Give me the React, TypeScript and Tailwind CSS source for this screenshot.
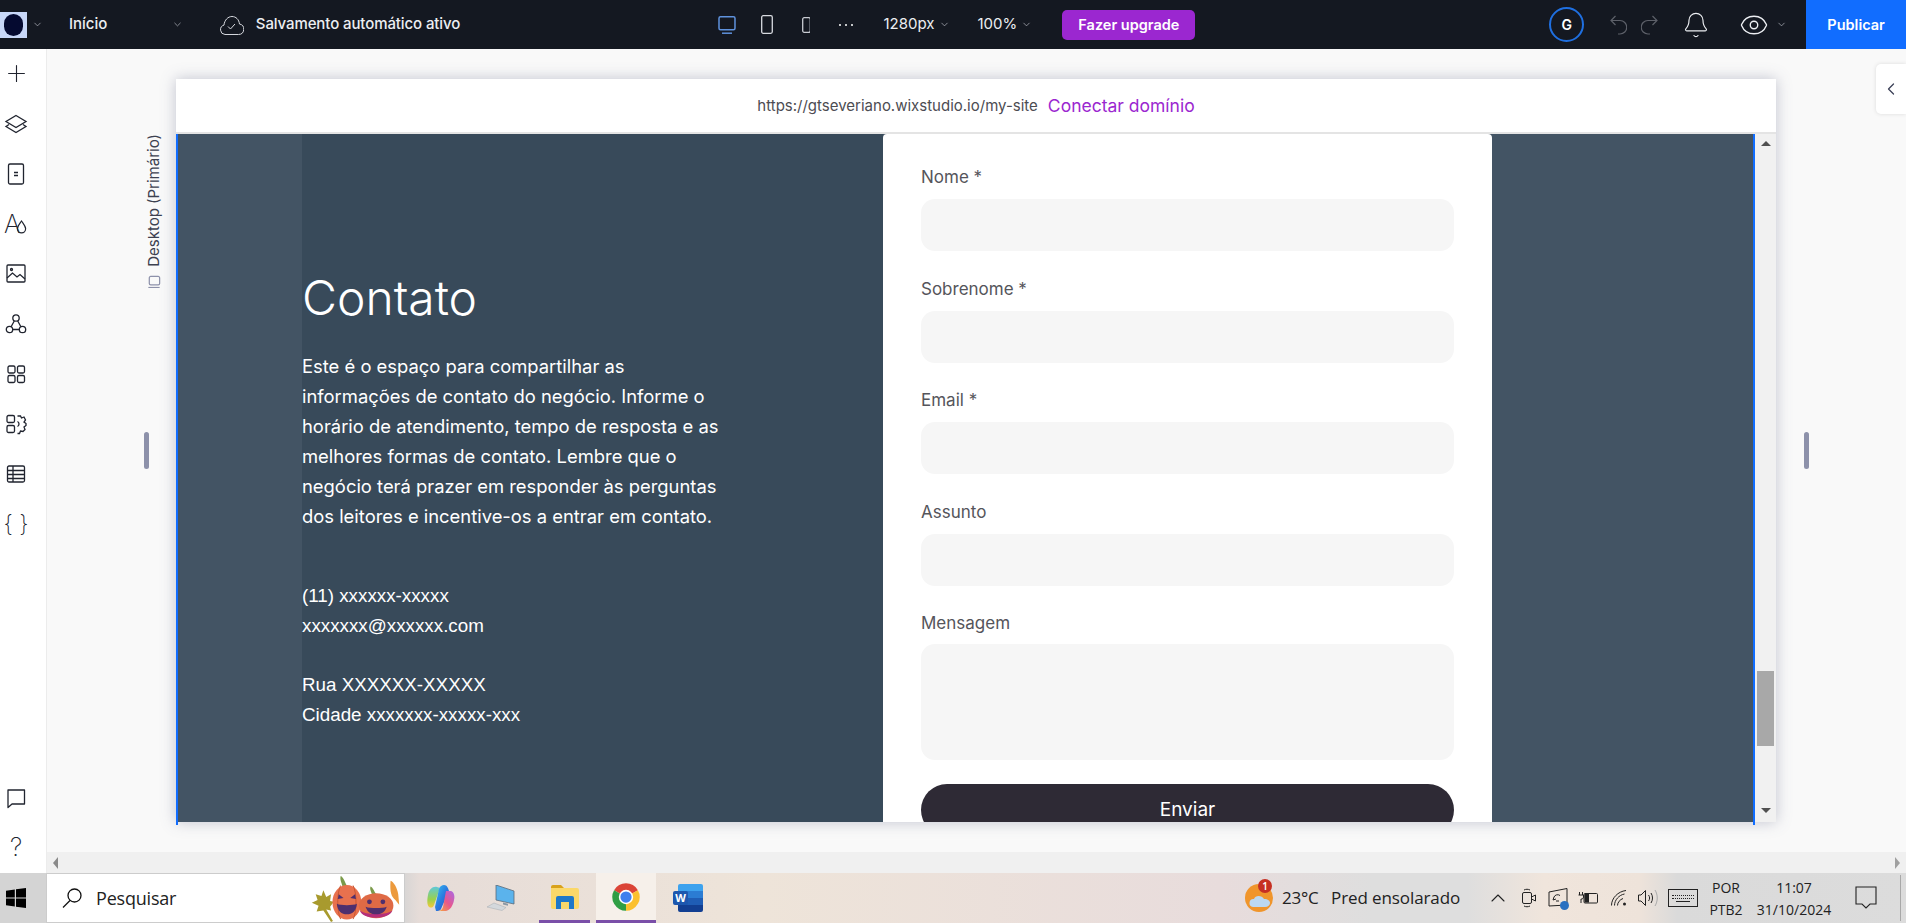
import React from "react";
import { Plus, ChevronDown, ChevronLeft, ChevronUp, Bell, Eye } from "lucide-react";

const railIcon = "h-[24px] w-[24px] fill-none stroke-[#20242f] stroke-[1.3]";

const RailLayers = () => (
  <svg viewBox="0 0 24 24" className={railIcon}>
    <path d="M12 3.500 22 9.500 12 15.500 2 9.500Z" />
    <path d="M5 12.500 2 14.500 12 20.500 22 14.500 19 12.500" />
  </svg>
);
const RailPages = () => (
  <svg viewBox="0 0 24 24" className={railIcon}>
    <rect x="4.500" y="2" width="15" height="20" rx="1.500" />
    <path d="M10 10.500h4M10 13.500h4" />
  </svg>
);
const RailFont = () => (
  <div className="flex h-[24px] w-[24px] items-center">
    <span className="text-[25px] leading-none font-extralight text-[#20242f]">A</span>
    <svg viewBox="0 0 12 16" className="-ml-[4px] mt-[5px] h-[15px] w-[11px] shrink-0 fill-none stroke-[#20242f] stroke-[1.300]">
      <path d="M6 2C4 5 1.500 7.500 1.500 10.500a4.500 4.500 0 0 0 9 0C10.500 7.500 8 5 6 2Z" />
    </svg>
  </div>
);
const RailImage = () => (
  <svg viewBox="0 0 24 24" className={railIcon}>
    <rect x="3" y="3" width="18" height="17" rx="1" />
    <path d="M3 16 8.500 11 13 15l3-2.500 5 4.500" />
    <circle cx="7.500" cy="7.500" r="1" />
  </svg>
);
const RailNodes = () => (
  <svg viewBox="0 0 24 24" className={railIcon}>
    <circle cx="12" cy="6" r="3.200" />
    <circle cx="5.500" cy="17.500" r="3.200" />
    <circle cx="18.500" cy="17.500" r="3.200" />
    <path d="M10.400 8.800 7.100 14.700M13.600 8.800l3.300 5.900M8.700 17.500h6.600" />
  </svg>
);
const RailGrid = () => (
  <svg viewBox="0 0 24 24" className={railIcon}>
    <rect x="4" y="4" width="7" height="7" rx="1.500" />
    <rect x="13.500" y="4" width="7" height="7" rx="1.500" />
    <rect x="4" y="13.500" width="7" height="7" rx="1.500" />
    <rect x="13.500" y="13.500" width="7" height="7" rx="1.500" />
  </svg>
);
const RailApps = () => (
  <svg viewBox="0 0 24 24" className={railIcon}>
    <rect x="3" y="3.500" width="7.500" height="7" rx="1.500" />
    <rect x="3" y="13.500" width="7.500" height="7" rx="1.500" />
    <path d="M13.500 4h3l1 2 2.500-1 1.500 3-1.500 2 2 1.500v2l-2 1.500 1 2.500-2 2-2.500-.5-1 2.500h-2" />
    <path d="M13.500 9.500c2 1 2 4 0 5" />
  </svg>
);
const RailTable = () => (
  <svg viewBox="0 0 24 24" className={railIcon}>
    <rect x="3.500" y="4" width="17" height="16" rx="1.500" />
    <path d="M3.500 8.500h17M3.500 12.500h17M3.500 16.500h17M9 4v16" />
  </svg>
);
const RailChat = () => (
  <svg viewBox="0 0 24 24" className={railIcon}>
    <path d="M4 4h16.500v14H8L4 21.500Z" strokeLinejoin="round" />
  </svg>
);

const MiniChevron = () => <ChevronDown className="h-[11px] w-[11px] text-[#b9bcc4]" strokeWidth={1.500} />;

const DeviceLabel = () => (
  <div className="ml-[100px] mt-[85px] flex h-[154px] w-[14px] flex-col items-center gap-[8px] text-[#3d4150]">
    <span className="rotate-180 text-[15px] leading-[14px] whitespace-nowrap [writing-mode:vertical-rl]">
      Desktop (Primário)
    </span>
    <svg viewBox="0 0 14 14" className="h-[14px] w-[14px] fill-none stroke-[#8d91aa] stroke-[1.300]">
      <rect x="1.500" y="1" width="9" height="11" rx="1.500" transform="rotate(90 7 7)" />
      <path d="M1 13.300h12" />
    </svg>
  </div>
);

const TopBar = () => (
  <header className="flex h-[49px] items-center bg-[#141821] text-[15px] font-medium text-[#eceef2]">
    <div className="flex h-[26px] w-[27px] items-center justify-center bg-[#c8d7f8]">
      <div className="h-[22px] w-[19px] rounded-full bg-[#050a30]" />
    </div>
    <div className="ml-[5px]"><MiniChevron /></div>
    <span className="ml-[26px] w-[103px]">Início</span>
    <MiniChevron />
    <svg viewBox="0 0 25 22" className="ml-[36px] h-[22px] w-[25px] fill-none stroke-[#d8dae0] stroke-[1]">
      <path d="M6 20.500a4.800 4.800 0 0 1-1-9.400C5.500 6 9 2.500 13 2.500s7 3 7.500 7.500a5.300 5.300 0 0 1-1 10.500Z" />
      <path d="m9 12.500 2.500 2.500 4.500-5" />
    </svg>
    <span className="ml-[12px] w-[206px] whitespace-nowrap tracking-[-0.1px]">Salvamento automático ativo</span>
    <svg viewBox="0 0 18 18" className="ml-[256px] h-[18px] w-[18px] fill-none stroke-[#5f92dd] stroke-[1.500]">
      <rect x="1" y="0.800" width="16" height="13" rx="1.500" />
      <path d="M4 17.200h10" />
    </svg>
    <svg viewBox="0 0 12 19" className="ml-[25px] h-[19px] w-[12px] fill-none stroke-[#d8dae0] stroke-[1.300]">
      <rect x="0.700" y="0.700" width="10.600" height="17.600" rx="1.500" />
    </svg>
    <svg viewBox="0 0 9 16" className="ml-[29px] h-[16px] w-[9px] fill-none stroke-[#c9ccd3] stroke-[1.300]">
      <rect x="0.700" y="0.700" width="7.600" height="14.600" rx="1.500" />
    </svg>
    <div className="ml-[29px] flex w-[14px] justify-between">
      <span className="h-[2px] w-[2px] rounded-full bg-white" />
      <span className="h-[2px] w-[2px] rounded-full bg-white" />
      <span className="h-[2px] w-[2px] rounded-full bg-white" />
    </div>
    <span className="ml-[30px] w-[50px] font-normal whitespace-nowrap">1280px</span>
    <div className="ml-[6px]"><MiniChevron /></div>
    <span className="ml-[27px] w-[38px] font-normal whitespace-nowrap">100%</span>
    <div className="ml-[6px]"><MiniChevron /></div>
    <button className="ml-[30px] h-[30px] w-[133px] rounded-[5px] bg-[#9b27d0] text-[14.500px] font-semibold text-white">
      Fazer upgrade
    </button>
    <div className="ml-[354px] flex h-[35px] w-[35px] items-center justify-center rounded-full border-2 border-[#1f6fe0] text-[14px] font-semibold text-white">
      G
    </div>
    <svg viewBox="0 0 17 20" className="ml-[26px] h-[20px] w-[17px] fill-none stroke-[#5d6069] stroke-[1.200]">
      <path d="M5.500 1 1 5.500 5.500 10M1 5.500h9a6 6 0 0 1 0 13.500H8" />
    </svg>
    <svg viewBox="0 0 17 20" className="ml-[14px] h-[20px] w-[17px] fill-none stroke-[#5d6069] stroke-[1.200]">
      <path d="M11.500 1 16 5.500 11.500 10M16 5.500H7A6 6 0 0 0 7 19h2" />
    </svg>
    <Bell className="ml-[24px] h-[28px] w-[28px] text-[#eceef2]" strokeWidth={1} />
    <Eye className="ml-[29px] h-[30px] w-[30px] text-[#eceef2]" strokeWidth={1.100} />
    <div className="ml-[7px]"><MiniChevron /></div>
    <button className="ml-[19px] h-full w-[100px] bg-[#116dff] text-[14.500px] font-semibold text-white">Publicar</button>
  </header>
);

const Rail = () => {
  const top = [
    <Plus key="plus" className="-mt-[2px] h-[27px] w-[27px] text-[#20242f]" strokeWidth={1} />,
    <RailLayers key="layers" />,
    <RailPages key="pages" />,
    <RailFont key="font" />,
    <RailImage key="image" />,
    <RailNodes key="nodes" />,
    <RailGrid key="grid" />,
    <RailApps key="apps" />,
    <RailTable key="table" />,
    <span key="code" className="text-[23px] leading-none font-extralight text-[#20242f]">{"{ }"}</span>,
  ];
  return (
    <aside className="flex w-[47px] flex-col justify-between border-r border-[#ececec] bg-white">
      <div className="flex flex-col">
        {top.map((icon, i) => (
          <div key={i} className="flex h-[50px] w-[32px] items-center justify-center">{icon}</div>
        ))}
      </div>
      <div className="flex flex-col">
        <div className="-mt-px flex h-[50px] w-[32px] items-center justify-center"><RailChat /></div>
        <div className="flex h-[50px] w-[32px] items-center justify-center">
          <span className="text-[25px] font-extralight text-[#20242f]">?</span>
        </div>
      </div>
    </aside>
  );
};

const fields = ["Nome *", "Sobrenome *", "Email *", "Assunto"];

const ContactForm = () => (
  <div className="h-[688px] w-[609px] shrink-0 overflow-hidden rounded-t-[4px] bg-white px-[38px] pt-[31px]">
    {fields.map((label) => (
      <div key={label} className="mb-[25.500px]">
        <label className="mb-[10px] block text-[17px] leading-[24px] text-[#55555b]">{label}</label>
        <input className="block h-[52px] w-full rounded-[14px] bg-[#f6f6f6]" />
      </div>
    ))}
    <label className="mb-[9px] block text-[17px] leading-[24px] text-[#55555b]">Mensagem</label>
    <textarea className="block h-[116px] w-full resize-none rounded-[14px] bg-[#f6f6f6]" />
    <button className="mt-[24px] h-[52px] w-full rounded-[26px] bg-[#2e2a35] text-[19px] leading-[48px] text-white">Enviar</button>
  </div>
);

const SiteBody = () => (
  <div className="relative h-[688px] w-[1600px]">
    <div className="flex h-[688px] overflow-hidden bg-[#435464]">
      <div className="w-[126px] shrink-0 bg-[#435464]" />
      <div className="w-[581px] shrink-0 bg-[#384a5a] pt-[132px] text-white">
        <h1 className="text-[48px] leading-[64px] font-light">Contato</h1>
        <p className="mt-[21px] w-[440px] text-[18.400px] leading-[30px]">
          Este é o espaço para compartilhar as
          <br />
          informações de contato do negócio. Informe o
          <br />
          horário de atendimento, tempo de resposta e as
          <br />
          melhores formas de contato. Lembre que o
          <br />
          negócio terá prazer em responder às perguntas
          <br />
          dos leitores e incentive-os a entrar em contato.
        </p>
        <div className="mt-[50px] text-[18.800px] leading-[29.700px] [font-family:'Liberation_Sans',sans-serif]">
          <p>(11) xxxxxx-xxxxx</p>
          <p>xxxxxxx@xxxxxx.com</p>
          <p className="mt-[30px]">Rua XXXXXX-XXXXX</p>
          <p>Cidade xxxxxxx-xxxxx-xxx</p>
        </div>
      </div>
      <ContactForm />
      <div className="w-[263px] shrink-0 bg-[#435464]" />
      <div className="flex w-[21px] shrink-0 flex-col items-center bg-[#f1f1f1]">
        <div className="mt-[7px] h-0 w-0 border-x-[5px] border-b-[5px] border-x-transparent border-b-[#505050]" />
        <div className="mt-[525px] h-[75px] w-[17px] bg-[#a8a8a8]" />
        <div className="mt-[62px] h-0 w-0 border-x-[5px] border-t-[5px] border-x-transparent border-t-[#505050]" />
      </div>
    </div>
    <div className="absolute top-0 left-0 h-[691px] w-[2px] bg-[#116dff]" />
    <div className="absolute top-0 left-[1577px] h-[691px] w-[2px] bg-[#116dff]" />
  </div>
);

const Canvas = () => (
  <div className="flex min-h-0 min-w-0 flex-1 flex-col">
    <main className="flex min-h-0 flex-1 bg-[#f9f9f9]">
      <div className="w-[129px] shrink-0">
        <DeviceLabel />
        <div className="ml-[97px] mt-[144px] h-[37px] w-[5px] rounded-full bg-[#8d91aa]" />
      </div>
      <div className="mt-[30px] h-[743px] w-[1600px] shrink-0 bg-white shadow-[0_0_14px_rgba(90,95,130,0.35)]">
        <div className="flex h-[55px] items-center justify-center gap-[10px] border-b-2 border-[#e4e4e4] pt-[2px]">
          <span className="text-[15px] text-[#4c4c52]">https://gtseveriano.wixstudio.io/my-site</span>
          <span className="text-[17.500px] text-[#9b27d0]">Conectar domínio</span>
        </div>
        <SiteBody />
      </div>
      <div className="flex flex-1">
        <div className="ml-[28px] mt-[383px] h-[37px] w-[5px] rounded-full bg-[#8d91aa]" />
        <button className="ml-auto mt-[15px] flex h-[50px] w-[30px] items-center justify-center rounded-l-[5px] bg-white shadow-[0_0_4px_rgba(0,0,0,0.12)]">
          <ChevronLeft className="h-[20px] w-[20px] text-[#3b4057]" strokeWidth={1.500} />
        </button>
      </div>
    </main>
    <div className="flex h-[21px] shrink-0 items-center justify-between bg-[#f0f0f0] px-[6px]">
      <div className="h-0 w-0 border-y-[6px] border-r-[5px] border-y-transparent border-r-[#8a8a8a]" />
      <div className="h-0 w-0 border-y-[6px] border-l-[5px] border-y-transparent border-l-[#a0a0a0]" />
    </div>
  </div>
);

const WindowsLogo = () => (
  <svg viewBox="0 0 20 20" className="h-[20px] w-[20px] fill-black">
    <path d="M0 2.800 8.800 1.500v8H0ZM10 1.300 20 0v9.500H10ZM0 10.500h8.800v8L0 17.200ZM10 10.500h10V20l-10-1.300Z" />
  </svg>
);

const Pumpkins = () => (
  <svg viewBox="0 0 92 50" className="h-[48px] w-[92px] shrink-0 overflow-visible">
    <path d="M12 17l3 7 5-3-1 7 4 1-4 5 1 4-5-1 7 12-2 1-8-12-7 1 2-6-7-3 6-3-2-6 6 2Z" fill="#a89a2e" />
    <path d="M32 13c-1-4-3-7-2-11 3 1 4 6 7 11Z" fill="#7b9a4a" />
    <ellipse cx="36.500" cy="29.500" rx="15" ry="18" fill="#e8714e" />
    <path d="M30 12c-4 8-4 27 0 35M43 12c4 8 4 27 0 35" fill="none" stroke="#c9552f" strokeWidth="1" />
    <path d="M28 21l5 4-6 1ZM45 21l-5 4 6 1Z" fill="#4f2f6e" />
    <path d="M26 31c4 2 17 2 21 0-1 8-5 11-10.500 11S27 39 26 31Z" fill="#4f2f6e" />
    <path d="M63 22c-1-3-3-6-2-9 3 1 4 6 7 9Z" fill="#7b9a4a" />
    <ellipse cx="67" cy="33" rx="18" ry="13" fill="#df6a45" />
    <path d="M50 38c3 10 30 10 34 0-6 5-28 5-34 0Z" fill="#b52f7a" />
    <circle cx="60" cy="29" r="2.500" fill="#4f2f6e" />
    <circle cx="74" cy="29" r="2.500" fill="#4f2f6e" />
    <path d="M56 34c5 2 17 2 22 0-2 6-6 8-11 8s-9-2-11-8Z" fill="#4f2f6e" />
    <path d="M82 7c3 1 7 7 8 14l1 11-4-5c-4-3-6-8-5-20Z" fill="#ec9a3c" />
  </svg>
);

const Copilot = () => (
  <svg viewBox="0 0 30 28" className="h-[28px] w-[30px]">
    <defs>
      <linearGradient id="copA" x1="0" y1="0" x2="1" y2="1">
        <stop offset="0" stopColor="#35c1f1" />
        <stop offset="0.500" stopColor="#2a7be0" />
        <stop offset="1" stopColor="#2d4fc9" />
      </linearGradient>
      <linearGradient id="copB" x1="0" y1="1" x2="1" y2="0">
        <stop offset="0" stopColor="#f6a93a" />
        <stop offset="0.500" stopColor="#e8578c" />
        <stop offset="1" stopColor="#a868e8" />
      </linearGradient>
      <linearGradient id="copC" x1="0" y1="0" x2="0" y2="1">
        <stop offset="0" stopColor="#5fc8d8" />
        <stop offset="0.600" stopColor="#9ad14b" />
        <stop offset="1" stopColor="#f6c83a" />
      </linearGradient>
    </defs>
    <path d="M3 11C4 5 8 2 12 3l3 1-6 17c-1 3-3 3-5 2-2-2-2-7-1-12Z" fill="url(#copC)" />
    <path d="M14 5c1-3 3-4 5-4 3 0 4 3 5 6l-8 18c-1 2-3 2-5 2l-1-4Z" fill="url(#copA)" />
    <path d="M21 7h5c3 1 4 5 3 9-1 6-4 10-8 11h-8c2 0 4-1 5-4Z" fill="url(#copB)" />
  </svg>
);

const PcIcon = () => (
  <svg viewBox="0 0 28 26" className="h-[26px] w-[28px]">
    <path d="M9 0l18 6v13L9 15Z" fill="#5bb3ec" stroke="#5c6a78" strokeWidth="0.800" />
    <path d="M16 17.500l5 1.200v2l-5-1.200Z" fill="#8a98a5" />
    <path d="M7 18l12 4.500-4 3L0 22Z" fill="#d4d8dc" stroke="#a4aab0" strokeWidth="0.500" />
  </svg>
);

const FolderIcon = () => (
  <svg viewBox="0 0 28 24" className="h-[24px] w-[28px]">
    <path d="M0 2a2 2 0 0 1 2-2h8l3 3H0Z" fill="#d9a21b" />
    <path d="M0 3h26a2 2 0 0 1 2 2v17a2 2 0 0 1-2 2H2a2 2 0 0 1-2-2Z" fill="#fbd869" />
    <path d="M5 24V13a2 2 0 0 1 2-2h14a2 2 0 0 1 2 2v11h-5v-7h-8v7Z" fill="#1f78c8" />
  </svg>
);

const ChromeIcon = () => (
  <svg viewBox="0 0 48 48" className="h-[30px] w-[30px]">
    <path d="M24 24 4.950 13A22 22 0 0 1 43.050 13Z" fill="#db4437" />
    <path d="M24 24 43.050 13A22 22 0 0 1 24 46Z" fill="#fbc02d" />
    <path d="M24 24 24 46A22 22 0 0 1 4.950 13Z" fill="#2f9e44" />
    <circle cx="24" cy="24" r="11.500" fill="#fff" />
    <circle cx="24" cy="24" r="9" fill="#3f80ee" />
  </svg>
);

const WordIcon = () => (
  <div className="relative h-[28px] w-[30px]">
    <div className="ml-[5px] flex h-full w-[25px] flex-col overflow-hidden rounded-[2px]">
      <div className="h-1/4 bg-[#3da2ee]" />
      <div className="h-1/4 bg-[#2b7cd3]" />
      <div className="h-1/4 bg-[#1f5db5]" />
      <div className="h-1/4 bg-[#123f92]" />
    </div>
    <div className="absolute top-[7px] left-0 flex h-[14px] w-[15px] items-center justify-center rounded-[2px] bg-[#1c57ae] text-[11px] font-bold text-white">
      W
    </div>
  </div>
);

const trayIcon = "fill-none stroke-[#222] stroke-[1]";

const Tray = () => (
  <div className="flex items-center">
    <ChevronUp className="ml-[27px] h-[24px] w-[24px] text-[#222]" strokeWidth={1.100} />
    <svg viewBox="0 0 14 20" className={`ml-[12px] h-[20px] w-[14px] ${trayIcon}`}>
      <rect x="0.500" y="4.500" width="9" height="11" rx="1.500" />
      <path d="M9.500 9l4-2v6l-4-2M2 2c2-1 4-1 6 0M2 18c2 1 4 1 6 0" />
    </svg>
    <div className="relative ml-[12px] h-[20px] w-[20px]">
      <svg viewBox="0 0 20 20" className={`h-[20px] w-[20px] ${trayIcon}`}>
        <path d="M1 4 19 0.500V17L1 18Z" />
        <path d="M12 7.500A4 4 0 0 0 6 9l-1 3 3-1M8 13h3" />
      </svg>
      <div className="absolute right-[-1px] bottom-[-2px] h-[9px] w-[9px] rounded-full bg-[#2a70c0]" />
    </div>
    <svg viewBox="0 0 20 14" className={`ml-[10px] h-[14px] w-[20px] ${trayIcon}`}>
      <rect x="6" y="2.500" width="13.500" height="9.500" rx="1" />
      <rect x="7" y="3.500" width="3.500" height="7.500" fill="#222" />
      <path d="M1.500 1v3M4.500 1v3M0.500 4h5v2a2 2 0 0 1-2.500 2v4" />
    </svg>
    <svg viewBox="0 0 16 16" className={`ml-[13px] h-[16px] w-[16px] ${trayIcon}`}>
      <path d="M0.500 15.500C0.500 8 7 1.500 15 0.500M3.500 15.500C3.500 10 8 5 13.500 4M6.500 15.500c0-3 2.500-6 5.500-7" />
      <circle cx="13.500" cy="14" r="1.500" fill="#222" stroke="none" />
    </svg>
    <svg viewBox="0 0 20 18" className={`ml-[11px] h-[18px] w-[20px] ${trayIcon}`}>
      <path d="M0.500 6H3L7.500 1.500v15L3 12H0.500ZM10.500 6c1.500 2 1.500 4 0 6M13 4c2 3 2 7 0 10" />
      <path d="M17 1c3 5 3 11 0 16" stroke="#aaa" />
    </svg>
    <div className="ml-[10px] flex h-[18px] w-[30px] flex-col items-center justify-center gap-[2px] border border-[#222]">
      <span className="w-[22px] border-t border-dotted border-[#222]" />
      <span className="w-[22px] border-t border-dotted border-[#222]" />
      <span className="w-[14px] border-t border-[#222]" />
    </div>
  </div>
);

const Taskbar = () => (
  <footer className="flex h-[50px] shrink-0 items-stretch bg-[linear-gradient(90deg,#d4d4d4_0%,#d4d4d4_21%,#e6dcd8_22%,#eee4d9_40%,#e8dcdc_64%,#dedede_72%,#dedede_77%,#f0e5dc_81%,#eee3da_86%,#dadada_88%,#dcdcdc_100%)] text-[#222] [font-family:'Open_Sans',sans-serif]">
    <div className="flex w-[46px] shrink-0 items-center justify-start pl-[6px]">
      <WindowsLogo />
    </div>
    <div className="flex w-[359px] shrink-0 items-center justify-between border border-[#cccccc] bg-white pl-[15px] pr-[2px]">
      <div className="flex items-center gap-[14px]">
        <svg viewBox="0 0 20 20" className="h-[20px] w-[20px] fill-none stroke-[#111] stroke-[1.300]">
          <circle cx="12.500" cy="7.500" r="6.500" />
          <path d="M8 12.500 1 19.500" />
        </svg>
        <span className="text-[18px] tracking-[-0.2px]">Pesquisar</span>
      </div>
      <Pumpkins />
    </div>
    <div className="ml-[5px] flex w-[60px] items-center justify-center"><Copilot /></div>
    <div className="ml-[1px] flex w-[60px] items-center justify-center"><PcIcon /></div>
    <div className="ml-[8px] flex w-[51px] items-center justify-center border-b-[3px] border-[#7a4fa8]"><FolderIcon /></div>
    <div className="ml-[6px] flex w-[60px] items-center justify-center border-b-[3px] border-[#7a4fa8] bg-[#f6f0ea]"><ChromeIcon /></div>
    <div className="ml-[2px] flex w-[60px] items-center justify-center"><WordIcon /></div>
    <div className="relative ml-[527px] flex w-[28px] items-center">
      <svg viewBox="0 0 28 30" className="h-[30px] w-[28px]">
        <circle cx="14" cy="15" r="14" fill="#f0952b" />
        <path d="M8 24a4 4 0 0 1 1-8c1-4 8-4 10 0 4 0 6 2 6 4s-2 4-5 4Z" fill="#bcd8f0" />
      </svg>
      <div className="absolute top-[6px] left-[13px] flex h-[14px] w-[14px] items-center justify-center rounded-full bg-[#c62f22] text-[10px] font-semibold text-white">
        1
      </div>
    </div>
    <div className="ml-[9px] flex w-[38px] items-center text-[17px] tracking-[-0.2px] whitespace-nowrap">23°C</div>
    <div className="ml-[11px] flex w-[128px] items-center text-[17px] tracking-[-0.1px] whitespace-nowrap">Pred ensolarado</div>
    <Tray />
    <div className="ml-[10px] flex w-[36px] flex-col items-center justify-center gap-[3px] text-[14px] leading-[19px]">
      <span>POR</span>
      <span>PTB2</span>
    </div>
    <div className="ml-[12px] flex w-[76px] flex-col items-center justify-center gap-[3px] text-[14px] leading-[19px]">
      <span>11:07</span>
      <span>31/10/2024</span>
    </div>
    <div className="ml-[23px] flex w-[22px] items-center">
      <svg viewBox="0 0 22 24" className="h-[24px] w-[22px] fill-none stroke-[#222] stroke-[1.100]">
        <path d="M1 1h20v17h-6l-4 4-4-4H1Z" />
      </svg>
    </div>
    <div className="ml-[23px] my-[2px] w-px bg-[#a8a8a8]" />
  </footer>
);

export default function App() {
  return (
    <div className="flex h-[923px] w-[1906px] flex-col overflow-hidden [font-family:Inter,sans-serif]">
      <TopBar />
      <div className="flex min-h-0 flex-1">
        <Rail />
        <Canvas />
      </div>
      <Taskbar />
    </div>
  );
}
